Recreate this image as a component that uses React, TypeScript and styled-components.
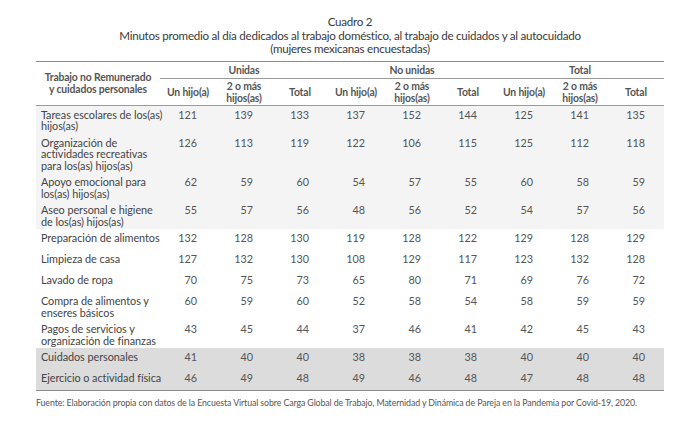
import React from "react";
import styled, { createGlobalStyle } from "styled-components";

const GlobalStyle = createGlobalStyle`
    html, body {
        margin: 0;
        padding: 0;
        background: #fff;
    }
    body {
        font-family: Lato, "Open Sans", "Liberation Sans", sans-serif;
        color: #444;
    }
`;

//////////////////////////////////// Página
const Page = styled.main`
    width: 700px;
    height: 426px;
    padding-top: 15px;
    box-sizing: border-box;
`;

const Caption = styled.header`
    display: flex;
    flex-direction: column;
    align-items: center;
    font-size: 11.6px;
    letter-spacing: -0.25px;
    line-height: 13.5px;
    color: #3a3a3a;
    margin-bottom: 5px;
`;

//////////////////////////////////// Tabla
const Table = styled.table`
    width: 628px;
    margin: 0 auto;
    border-collapse: collapse;
    table-layout: fixed;
    border-top: 1.5px solid #8c8c8c;
    border-bottom: 1.5px solid #8c8c8c;
`;

const HeadCell = styled.th<{ grupo?: boolean }>`
    font-size: 10.4px;
    letter-spacing: -0.15px;
    font-weight: 700;
    color: #555;
    text-align: center;
    vertical-align: middle;
    white-space: nowrap;
    line-height: 12px;
    padding: 0;
    height: ${p => (p.grupo ? "16px" : "26px")};
    border-bottom: 1px solid #9a9a9a;
`;

const Row = styled.tr<{ tono: "claro" | "blanco" | "oscuro" }>`
    background: ${p => (p.tono === "claro" ? "#f4f4f4" : p.tono === "oscuro" ? "#dcdcdc" : "#fff")};
`;

const Label = styled.td`
    font-size: 10.85px;
    letter-spacing: -0.05px;
    line-height: 11.5px;
    color: #444;
    vertical-align: top;
    white-space: nowrap;
    height: 16px;
    padding: 3px 0 2px 5px;
`;

const Num = styled.td`
    font-size: 10.8px;
    line-height: 11.5px;
    color: #555;
    text-align: right;
    vertical-align: top;
    padding: 3px 19px 2px 0;
`;

const Footer = styled.footer`
    width: 628px;
    margin: 6px auto 0;
    font-size: 8.8px;
    letter-spacing: -0.1px;
    white-space: nowrap;
    color: #555;
`;

type Fila = { lineas: string[]; valores: number[]; tono: "claro" | "blanco" | "oscuro" };

const filas: Fila[] = [
    { lineas: ["Tareas escolares de los(as)", "hijos(as)"], valores: [121, 139, 133, 137, 152, 144, 125, 141, 135], tono: "claro" },
    { lineas: ["Organización de", "actividades recreativas", "para los(as) hijos(as)"], valores: [126, 113, 119, 122, 106, 115, 125, 112, 118], tono: "claro" },
    { lineas: ["Apoyo emocional para", "los(as) hijos(as)"], valores: [62, 59, 60, 54, 57, 55, 60, 58, 59], tono: "claro" },
    { lineas: ["Aseo personal e higiene", "de los(as) hijos(as)"], valores: [55, 57, 56, 48, 56, 52, 54, 57, 56], tono: "claro" },
    { lineas: ["Preparación de alimentos"], valores: [132, 128, 130, 119, 128, 122, 129, 128, 129], tono: "blanco" },
    { lineas: ["Limpieza de casa"], valores: [127, 132, 130, 108, 129, 117, 123, 132, 128], tono: "blanco" },
    { lineas: ["Lavado de ropa"], valores: [70, 75, 73, 65, 80, 71, 69, 76, 72], tono: "blanco" },
    { lineas: ["Compra de alimentos y", "enseres básicos"], valores: [60, 59, 60, 52, 58, 54, 58, 59, 59], tono: "blanco" },
    { lineas: ["Pagos de servicios y", "organización de finanzas"], valores: [43, 45, 44, 37, 46, 41, 42, 45, 43], tono: "blanco" },
    { lineas: ["Cuidados personales"], valores: [41, 40, 40, 38, 38, 38, 40, 40, 40], tono: "oscuro" },
    { lineas: ["Ejercicio o actividad física"], valores: [46, 49, 48, 49, 46, 48, 47, 48, 48], tono: "oscuro" },
];

const grupos = ["Unidas", "No unidas", "Total"];

function Multilinea({ lineas }: { lineas: string[] }) {
    return (
        <>
            {lineas.map((l, i) => (
                <React.Fragment key={i}>
                    {i > 0 && <br />}
                    {l}
                </React.Fragment>
            ))}
        </>
    );
}

export default function App() {
    return (
        <Page>
            <GlobalStyle />
            <Caption>
                <span>Cuadro 2</span>
                <span>Minutos promedio al día dedicados al trabajo doméstico, al trabajo de cuidados y al autocuidado</span>
                <span>(mujeres mexicanas encuestadas)</span>
            </Caption>
            <Table>
                <colgroup>
                    <col style={{ width: 124 }} />
                    {Array.from({ length: 9 }).map((_, i) => (
                        <col key={i} style={{ width: 56 }} />
                    ))}
                </colgroup>
                <thead>
                    <tr>
                        <HeadCell rowSpan={2}>
                            Trabajo no Remunerado
                            <br />y cuidados personales
                        </HeadCell>
                        {grupos.map(g => (
                            <HeadCell key={g} colSpan={3} grupo>
                                {g}
                            </HeadCell>
                        ))}
                    </tr>
                    <tr>
                        {grupos.map(g => (
                            <React.Fragment key={g}>
                                <HeadCell>Un hijo(a)</HeadCell>
                                <HeadCell>
                                    2 o más
                                    <br />
                                    hijos(as)
                                </HeadCell>
                                <HeadCell>Total</HeadCell>
                            </React.Fragment>
                        ))}
                    </tr>
                </thead>
                <tbody>
                    {filas.map((f, i) => (
                        <Row key={i} tono={f.tono}>
                            <Label>
                                <Multilinea lineas={f.lineas} />
                            </Label>
                            {f.valores.map((v, j) => (
                                <Num key={j}>{v}</Num>
                            ))}
                        </Row>
                    ))}
                </tbody>
            </Table>
            <Footer>
                Fuente: Elaboración propia con datos de la Encuesta Virtual sobre Carga Global de Trabajo, Maternidad y Dinámica de Pareja en la Pandemia por Covid-19, 2020.
            </Footer>
        </Page>
    );
}
